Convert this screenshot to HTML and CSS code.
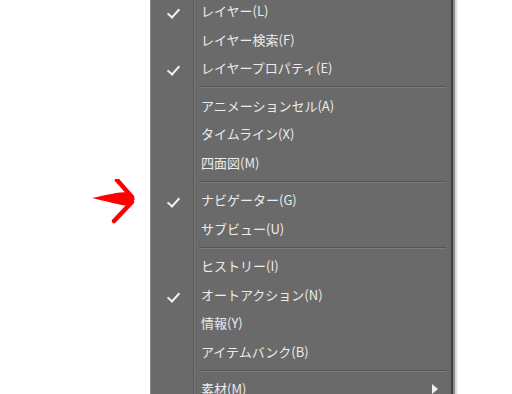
FILE: index.html
```html
<!DOCTYPE html>
<html lang="ja">
<head>
    <meta charset="UTF-8">
    <title>メニュー</title>
    <link rel="stylesheet" href="styles.css">
</head>
<body>
    <div class="stage">
        <svg class="pointer" width="50" height="50" viewBox="0 0 50 50">
            <path d="M1 19 C15 16 27 13 37 13 L44 20 L38 27 C27 26 15 22 1 19 Z" fill="#ff0000"/>
            <path d="M26 1 L41 18" stroke="#ff0000" stroke-width="4.5" stroke-linecap="round"/>
            <path d="M23 42 L41 23" stroke="#ff0000" stroke-width="4.5" stroke-linecap="round"/>
        </svg>

        <ul class="menu">
            <li class="item checked">レイヤー(L)</li>
            <li class="item">レイヤー検索(F)</li>
            <li class="item checked">レイヤープロパティ(E)</li>
            <li class="sep"></li>
            <li class="item">アニメーションセル(A)</li>
            <li class="item">タイムライン(X)</li>
            <li class="item">四面図(M)</li>
            <li class="sep"></li>
            <li class="item checked">ナビゲーター(G)</li>
            <li class="item">サブビュー(U)</li>
            <li class="sep"></li>
            <li class="item">ヒストリー(I)</li>
            <li class="item checked">オートアクション(N)</li>
            <li class="item">情報(Y)</li>
            <li class="item">アイテムバンク(B)</li>
            <li class="sep"></li>
            <li class="item sub">素材(M)</li>
        </ul>
    </div>
</body>
</html>
```

FILE: styles.css
```css
body {
    margin: 0;
    background-color: #ffffff;
    font-family: "Noto Sans CJK JP", "Noto Sans", sans-serif;
    overflow: hidden;
}

.stage {
    position: relative;
    width: 512px;
    height: 394px;
    overflow: hidden;
    display: flex;
    padding-left: 150px;
    box-sizing: border-box;
}

.pointer {
    position: absolute;
    left: 91px;
    top: 179px;
}

.menu {
    list-style: none;
    margin: -3px 0 0 0;
    padding: 0;
    width: 300px;
    height: 420px;
    background-color: #6a6a6a;
    border-left: 1px solid #8a8a8a;
    border-right: 2px solid #3e3e3e;
    box-shadow: 2px 0 0 #8c8c8c, 4px 0 2px rgba(0, 0, 0, 0.18);
    background-image: linear-gradient(to right, transparent 42px, #5c5c5c 42px, #5c5c5c 43px, #747474 43px, #747474 44px, transparent 44px);
}

.item {
    position: relative;
    height: 28.5px;
    line-height: 28.5px;
    padding-left: 50px;
    font-size: 13px;
    color: #ececec;
    white-space: nowrap;
}

.checked::before {
    content: "";
    position: absolute;
    left: 19px;
    top: 9px;
    width: 5px;
    height: 10px;
    border-right: 2px solid #f4f4f4;
    border-bottom: 2px solid #f4f4f4;
    transform: rotate(42deg);
}

.sub::after {
    content: "";
    position: absolute;
    left: 281px;
    top: 9px;
    border-left: 6px solid #f0f0f0;
    border-top: 5px solid transparent;
    border-bottom: 5px solid transparent;
}

.sep {
    height: 9px;
    display: flex;
    align-items: center;
    padding-left: 48px;
    padding-right: 5px;
}

.sep::after {
    content: "";
    flex: 1;
    height: 1px;
    border-top: 1px solid #555555;
    background-color: #7c7c7c;
}
```
